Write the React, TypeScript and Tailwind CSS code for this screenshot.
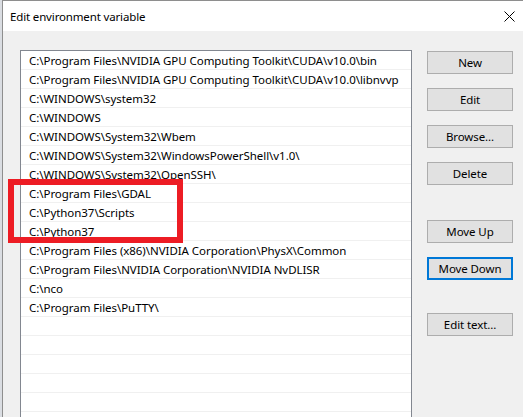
import React from 'react';

const paths = [
  'C:\\Program Files\\NVIDIA GPU Computing Toolkit\\CUDA\\v10.0\\bin',
  'C:\\Program Files\\NVIDIA GPU Computing Toolkit\\CUDA\\v10.0\\libnvvp',
  'C:\\WINDOWS\\system32',
  'C:\\WINDOWS',
  'C:\\WINDOWS\\System32\\Wbem',
  'C:\\WINDOWS\\System32\\WindowsPowerShell\\v1.0\\',
  'C:\\WINDOWS\\System32\\OpenSSH\\',
  'C:\\Program Files\\GDAL',
  'C:\\Python37\\Scripts',
  'C:\\Python37',
  'C:\\Program Files (x86)\\NVIDIA Corporation\\PhysX\\Common',
  'C:\\Program Files\\NVIDIA Corporation\\NVIDIA NvDLISR',
  'C:\\nco',
  'C:\\Program Files\\PuTTY\\',
  '', '', '', '', '', '',
];

function Btn({ label, focused, className = '' }: { label: string; focused?: boolean; className?: string }) {
  return (
    <button
      className={
        'w-[86px] h-[23px] flex items-center justify-center bg-[#e1e1e1] text-black text-[11.5px] tracking-[-0.1px] ' +
        (focused ? 'border-2 border-[#0078d7] ' : 'border border-[#adadad] ') +
        className
      }
    >
      {label}
    </button>
  );
}

export default function App() {
  return (
    <div
      className="w-[523px] h-[417px] overflow-hidden flex bg-[#d9d9d9] relative"
      style={{ fontFamily: '"Noto Sans", "Open Sans", sans-serif' }}
    >
      <div className="w-[2px] shrink-0 bg-[#dadde2]" />
      <div className="flex-1 flex flex-col border-l border-t border-[#8e8e8e] bg-[#f0f0f0]">
        {/* title bar */}
        <div className="h-[30px] shrink-0 bg-white flex items-center justify-between pl-[7px] pr-[7px]">
          <span className="text-[11.5px] tracking-[-0.15px] text-black pt-[1px]">Edit environment variable</span>
          <svg width="11" height="11" viewBox="0 0 11 11" className="mr-[1px]">
            <path d="M0.5 0.5 L10.5 10.5 M10.5 0.5 L0.5 10.5" stroke="#000" strokeWidth="1" />
          </svg>
        </div>

        {/* body */}
        <div className="flex pl-[17px] pt-[19px] gap-[15px]">
          <div className="w-[392px] h-[400px] bg-white border border-[#828790] flex flex-col">
            {paths.map((p, i) => (
              <div
                key={i}
                className="h-[19px] shrink-0 border-b border-[#f0f0f0] pl-2 pt-[1px] text-[11.5px] tracking-[-0.05px] leading-[18px] text-black whitespace-nowrap overflow-hidden"
              >
                {p}
              </div>
            ))}
          </div>

          <div className="flex flex-col pt-[1px]">
            <Btn label="New" />
            <Btn label="Edit" className="mt-[14px]" />
            <Btn label="Browse..." className="mt-[14px]" />
            <Btn label="Delete" className="mt-[14px]" />
            <Btn label="Move Up" className="mt-[35px]" />
            <Btn label="Move Down" focused className="mt-[14px]" />
            <Btn label="Edit text..." className="mt-[33px]" />
          </div>
        </div>
      </div>

      {/* red annotation box */}
      <div className="absolute left-[8px] top-[179px] w-[175px] h-[64px] border-[6px] border-[#ed1c24]" />
    </div>
  );
}
